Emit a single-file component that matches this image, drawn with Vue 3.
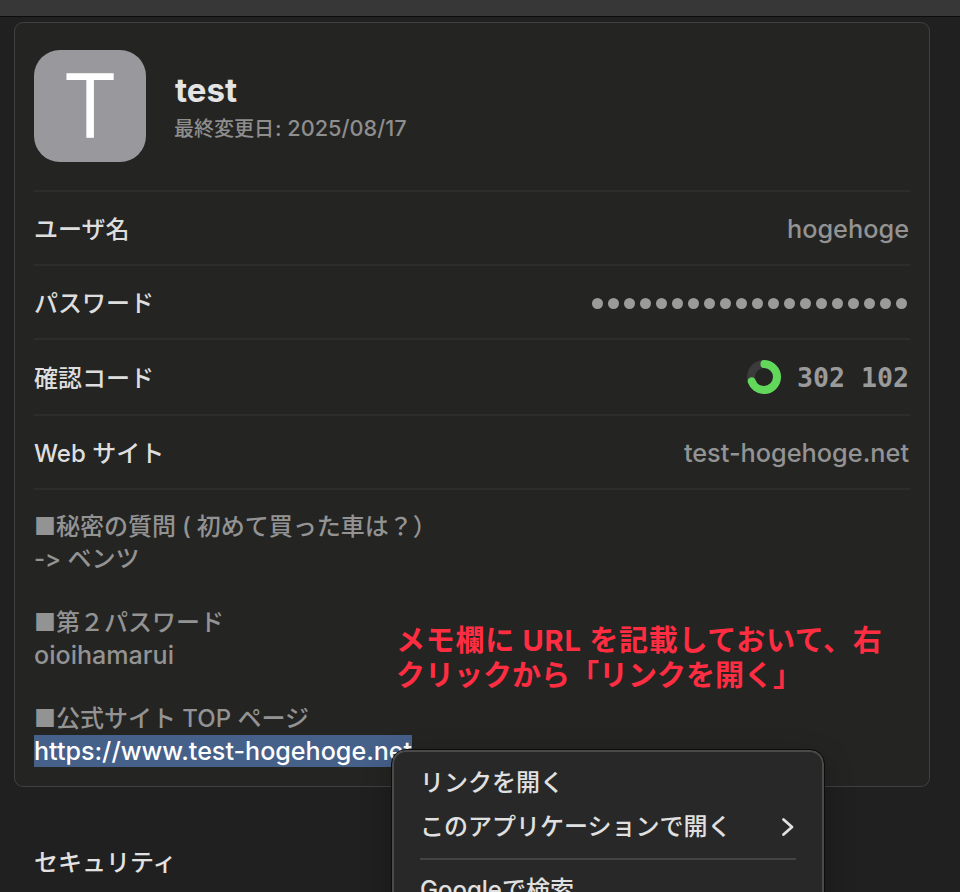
<script setup>
const rows = [
  { label: 'ユーザ名', value: 'hogehoge', type: 'text' },
  { label: 'パスワード', type: 'dots' },
  { label: '確認コード', value: '302 102', type: 'code' },
  { label: 'Web サイト', value: 'test-hogehoge.net', type: 'text' },
]
</script>

<template>
  <div class="page">
    <div class="topbar"></div>
    <section class="card">
      <header class="head">
        <div class="avatar"><span>T</span></div>
        <div class="meta">
          <div class="title">test</div>
          <div class="modified">最終変更日<span class="latin">: 2025/08/17</span></div>
        </div>
      </header>
      <div v-for="row in rows" :key="row.label" class="row">
        <span class="label">{{ row.label }}</span>
        <span v-if="row.type === 'text'" class="value">{{ row.value }}</span>
        <span v-else-if="row.type === 'dots'" class="dots">
          <i v-for="n in 20" :key="n"></i>
        </span>
        <span v-else class="otp">
          <svg width="36" height="36" viewBox="0 0 36 36">
            <circle cx="18" cy="18" r="13" fill="none" stroke="#3b3b3b" stroke-width="8" />
            <circle cx="18" cy="18" r="13" fill="none" stroke="#62d85b" stroke-width="8" stroke-linecap="round"
              stroke-dasharray="56 82" transform="rotate(-88 18 18)" />
          </svg>
          <span class="code">{{ row.value }}</span>
        </span>
      </div>
      <div class="notes">
        <p>■秘密の質問<span class="paren">(</span>初めて買った車は？）</p>
        <p>-&gt; ベンツ</p>
        <p>&nbsp;</p>
        <p>■第２パスワード</p>
        <p class="latin-line">oioihamarui</p>
        <p>&nbsp;</p>
        <p>■公式サイト TOP ページ</p>
        <p class="latin-line"><span class="selected">https://www.test-hogehoge.net</span></p>
      </div>
      <div class="annotation">メモ欄に URL を記載しておいて、右クリックから「リンクを開く」</div>
    </section>
    <h2 class="section">セキュリティ</h2>
    <div class="menu">
      <div class="item">リンクを開く</div>
      <div class="item sub">
        <span>このアプリケーションで開く</span>
        <svg width="14" height="20" viewBox="0 0 14 20">
          <path d="M2.5 2.5 L11 10 L2.5 17.5" fill="none" stroke="#e0e0e0" stroke-width="2.8" stroke-linecap="round" stroke-linejoin="round" />
        </svg>
      </div>
      <div class="sep"></div>
      <div class="item">Googleで検索</div>
    </div>
  </div>
</template>

<style>
html, body { margin: 0; background: #202020; }
</style>

<style scoped>
.page {
  position: relative;
  width: 960px;
  height: 892px;
  overflow: hidden;
  background: #202020;
  font-family: Inter, "Noto Sans CJK JP", sans-serif;
  font-variant-ligatures: none;
  font-feature-settings: "calt" 0;
  font-weight: 500;
  color: #e2e2e2;
}
.topbar {
  height: 16px;
  background: #373737;
  border-bottom: 1px solid #0c0c0c;
}
.card {
  position: relative;
  box-sizing: border-box;
  margin: 5px 30px 0 14px;
  height: 765px;
  padding: 0 19px;
  background: #242423;
  border: 1px solid #404040;
  border-radius: 9px;
}
.head {
  display: flex;
  align-items: center;
  gap: 28px;
  height: 169px;
  padding-bottom: 1px;
  border-bottom: 2px solid #2d2d2d;
  box-sizing: border-box;
}
.avatar {
  width: 112px;
  height: 112px;
  border-radius: 26px;
  background: #99989d;
  color: #fff;
  display: flex;
  align-items: center;
  justify-content: center;
  font-size: 86px;
  font-weight: 300;
  line-height: 1;
  -webkit-text-stroke: 1.5px #fff;
}
.title {
  font-size: 33px;
  line-height: 40px;
  font-weight: 700;
  color: #e4e4e4;
  padding-left: 1px;
}
.modified {
  font-size: 20px;
  line-height: 28px;
  color: #8e8e8e;
  margin-top: 4px;
}
.latin { font-size: 21.7px; margin-left: 1px; }
.row {
  display: flex;
  align-items: center;
  justify-content: space-between;
  box-sizing: border-box;
  height: 74px;
  border-bottom: 2px solid #2d2d2d;
  font-size: 24px;
}
.row:nth-of-type(3) { height: 76px; }
.label { color: #dedede; margin-bottom: 2px; }
.value { color: #939393; font-size: 25.3px; margin-right: 1px; }
.dots { display: flex; gap: 5px; margin-right: 3px; margin-top: 2px; }
.dots i {
  display: block;
  width: 11px;
  height: 11px;
  border-radius: 50%;
  background: #9b9b9b;
}
.otp { display: flex; align-items: center; gap: 15px; margin-right: 1px; }
.code {
  font-family: "DejaVu Sans Mono", monospace;
  font-size: 26.6px;
  font-weight: 700;
  color: #9a9a9a;
}
.notes {
  padding-top: 21px;
  font-size: 24px;
  line-height: 32px;
  color: #939393;
}
.notes p { margin: 0; }
.latin-line { font-size: 25.1px; height: 32px; }
.paren { margin: 0 6px 0 6px; }
.selected {
  display: block;
  width: fit-content;
  background: #456089;
  color: #fff;
}
.annotation {
  position: absolute;
  left: 381px;
  top: 600px;
  width: 495px;
  font-size: 29px;
  line-height: 35px;
  font-weight: 700;
  color: #ff2d42;
}
.annotation::first-line { letter-spacing: 0.75px; }
.section {
  margin: 60px 0 0 34px;
  font-size: 24px;
  line-height: 32px;
  font-weight: 500;
  color: #e2e2e2;
}
.menu {
  position: absolute;
  left: 392px;
  top: 750px;
  width: 432px;
  height: 180px;
  box-sizing: border-box;
  padding: 9px 26px;
  background: #282828;
  border: 2px solid #4a4a4a;
  outline: 1px solid #0c0c0c;
  border-radius: 14px;
  box-shadow: 0 10px 30px rgba(0, 0, 0, 0.3);
  font-size: 24px;
  color: #e0e0e0;
}
.item { height: 44px; line-height: 44px; }
.sub {
  display: flex;
  align-items: center;
  justify-content: space-between;
  padding-right: 1px;
}
.sep { height: 2px; background: #444; margin: 9px 0 8px; }
</style>
